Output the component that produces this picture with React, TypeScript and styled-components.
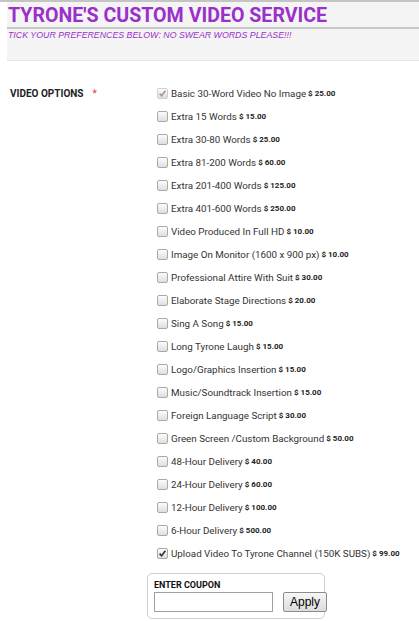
import React from 'react';
import styled, { createGlobalStyle } from 'styled-components';

const options = [
  { label: 'Basic 30-Word Video No Image', price: '25.00', checked: true, disabled: true },
  { label: 'Extra 15 Words', price: '15.00' },
  { label: 'Extra 30-80 Words', price: '25.00' },
  { label: 'Extra 81-200 Words', price: '60.00' },
  { label: 'Extra 201-400 Words', price: '125.00' },
  { label: 'Extra 401-600 Words', price: '250.00' },
  { label: 'Video Produced In Full HD', price: '10.00' },
  { label: 'Image On Monitor (1600 x 900 px)', price: '10.00' },
  { label: 'Professional Attire With Suit', price: '30.00' },
  { label: 'Elaborate Stage Directions', price: '20.00' },
  { label: 'Sing A Song', price: '15.00' },
  { label: 'Long Tyrone Laugh', price: '15.00' },
  { label: 'Logo/Graphics Insertion', price: '15.00' },
  { label: 'Music/Soundtrack Insertion', price: '15.00' },
  { label: 'Foreign Language Script', price: '30.00' },
  { label: 'Green Screen /Custom Background', price: '50.00' },
  { label: '48-Hour Delivery', price: '40.00' },
  { label: '24-Hour Delivery', price: '60.00' },
  { label: '12-Hour Delivery', price: '100.00' },
  { label: '6-Hour Delivery', price: '500.00' },
  { label: 'Upload Video To Tyrone Channel (150K SUBS)', price: '99.00', checked: true },
];

const GlobalStyle = createGlobalStyle`
  html, body {
    margin: 0;
    padding: 0;
    background: #fff;
    font-family: Roboto, "Liberation Sans", sans-serif;
  }
`;

const Page = styled.div`
  width: 419px;
  border-top: 2px solid #c4c4c4;
`;

const Header = styled.div`
  margin-left: 7px;
  background: #f4f4f4;
  height: 58px;
  border-bottom: 1px solid #e4e4e4;
`;

const Title = styled.h1`
  margin: 0;
  padding: 2px 0 0 1px;
  height: 23px;
  font-size: 19.6px;
  font-weight: 700;
  color: #9a2fca;
  line-height: 24px;
  border-bottom: 2px solid #c8c8c8;
`;

const Subtitle = styled.div`
  padding-left: 1px;
  font-family: "Liberation Sans", Arial, sans-serif;
  font-style: italic;
  font-size: 8.8px;
  line-height: 12px;
  color: #9a2fca;
`;

const Form = styled.div`
  display: grid;
  grid-template-columns: 157px 1fr;
  padding-top: 26px;
`;

const FieldLabel = styled.div`
  padding-left: 10px;
  font-size: 10px;
  font-weight: 700;
  color: #222;
  line-height: 13px;
`;

const Required = styled.span`
  color: #e53935;
  margin-left: 9px;
  font-weight: 400;
`;

const OptionList = styled.div`
  display: flex;
  flex-direction: column;
  gap: 10px;
`;

const Row = styled.label`
  display: flex;
  align-items: center;
  height: 13px;
  font-size: 9.8px;
  color: #333;
`;

const Box = styled.span<{ $disabled?: boolean }>`
  width: 11px;
  height: 11px;
  box-sizing: border-box;
  border: 1px solid ${(p) => (p.$disabled ? '#cfcfcf' : '#a9a9a9')};
  border-radius: 2px;
  background: linear-gradient(#fcfcfc, #dedede);
  margin-right: 3px;
  display: flex;
  align-items: center;
  justify-content: center;
`;

const Price = styled.span`
  font-size: 8px;
  font-weight: 700;
  color: #222;
  margin-left: 2px;
`;

const Coupon = styled.div`
  margin: 3px 0 0 -10px;
  width: 178px;
  box-sizing: border-box;
  border: 1px solid #cfcfcf;
  border-radius: 5px;
  padding: 5px 6px 6px 6px;
`;

const CouponLabel = styled.div`
  font-size: 9px;
  font-weight: 700;
  color: #111;
  line-height: 13px;
`;

const CouponRow = styled.div`
  display: flex;
  align-items: center;
  gap: 10px;
`;

const CouponInput = styled.input`
  width: 119px;
  height: 20px;
  box-sizing: border-box;
  border: 1px solid #a0a0a0;
  margin: 0;
  padding: 0;
`;

const ApplyButton = styled.button`
  height: 20px;
  padding: 0 6px;
  font-family: "Liberation Sans", Arial, sans-serif;
  font-size: 12px;
  color: #000;
  border: 1px solid #8d8d8d;
  border-radius: 2px;
  background: linear-gradient(#f6f6f6, #dcdcdc);
`;

const Check = ({ disabled }: { disabled?: boolean }) => (
  <svg width="9" height="9" viewBox="0 0 9 9">
    <path
      d="M1.6 4.6 L3.6 6.8 L7.4 1.8"
      fill="none"
      stroke={disabled ? '#9a9a9a' : '#333'}
      strokeWidth="1.6"
    />
  </svg>
);

export default function App() {
  return (
    <Page>
      <GlobalStyle />
      <Header>
        <Title>TYRONE'S CUSTOM VIDEO SERVICE</Title>
        <Subtitle>TICK YOUR PREFERENCES BELOW: NO SWEAR WORDS PLEASE!!!</Subtitle>
      </Header>
      <Form>
        <FieldLabel>
          VIDEO OPTIONS<Required>*</Required>
        </FieldLabel>
        <OptionList>
          {options.map((o, i) => (
            <Row key={i}>
              <Box $disabled={o.disabled}>{o.checked && <Check disabled={o.disabled} />}</Box>
              {o.label}
              <Price>$ {o.price}</Price>
            </Row>
          ))}
          <Coupon>
            <CouponLabel>ENTER COUPON</CouponLabel>
            <CouponRow>
              <CouponInput type="text" />
              <ApplyButton>Apply</ApplyButton>
            </CouponRow>
          </Coupon>
        </OptionList>
      </Form>
    </Page>
  );
}
